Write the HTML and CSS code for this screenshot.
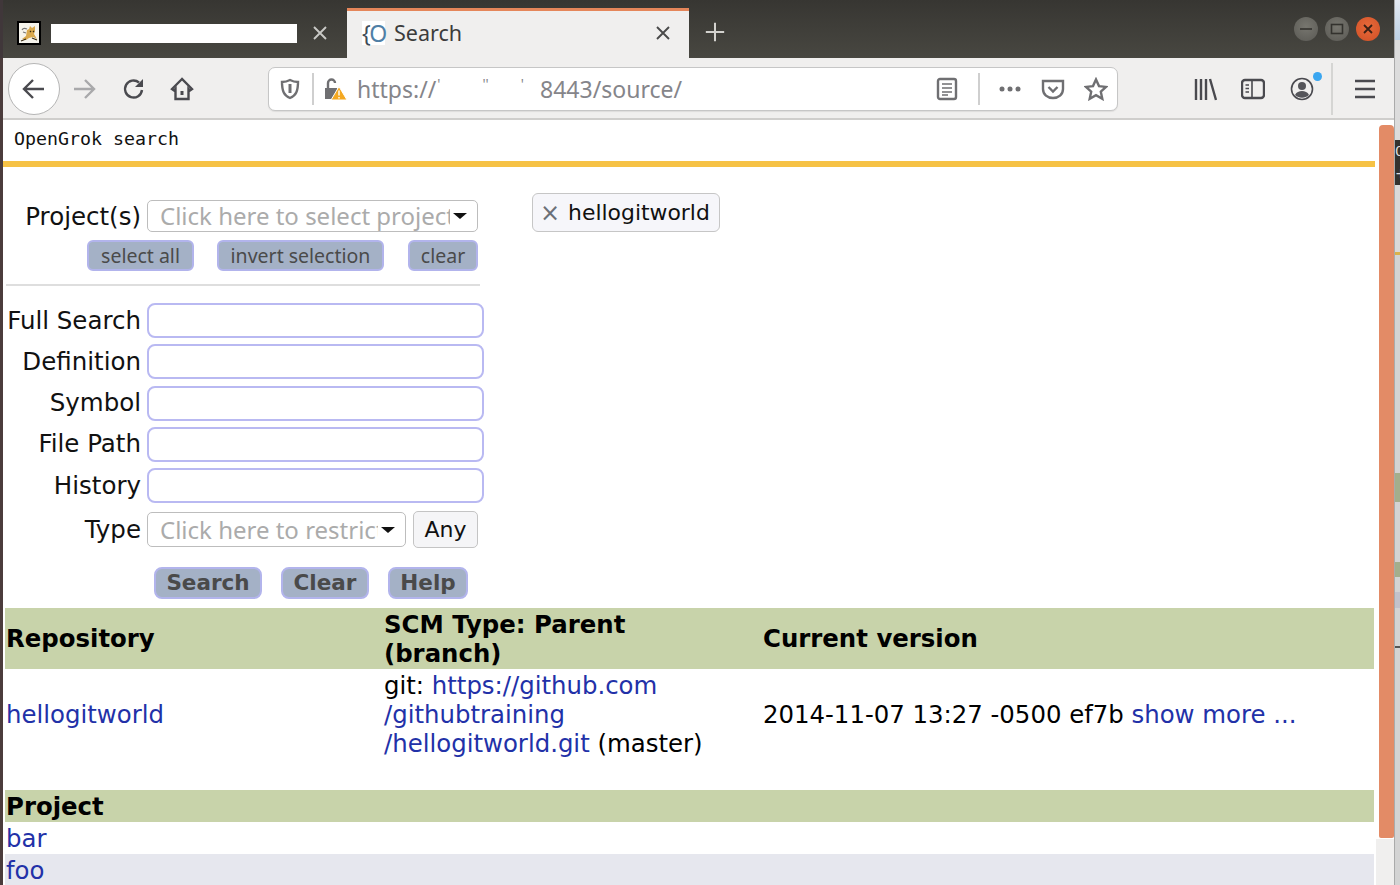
FILE: index.html
```html
<!DOCTYPE html>
<html lang="en">
<head>
<meta charset="utf-8">
<title>Search</title>
<link rel="stylesheet" href="styles.css">
</head>
<body>
<div class="screen">
  <div class="edge-left"><div class="edge-left-top"></div></div>
  <div class="window">
    <header class="tabbar">
      <div class="tab-idle">
        <svg class="favicon" viewBox="0 0 24 24"><rect x="1" y="1" width="22" height="22" fill="#f6f4ec" stroke="#000" stroke-width="2"/><path d="M5 18l4-3 1-6 2-1 1-3 2 2 3-2 0 5-1 3 3 5-4-2-4 1-3 2z" fill="#d9a94e"/><path d="M5 9c1-2 3-2 5-1M6 11l3 1" fill="none" stroke="#777" stroke-width="1.2"/><path d="M13 10l1 1M16 10l1 1M4 20l5-2M15 17l5 2" stroke="#3a2c14" stroke-width="1.2"/></svg>
        <div class="redact"></div>
        <svg class="tab-close light" viewBox="0 0 16 16"><path d="M2 2l12 12M14 2L2 14"/></svg>
      </div>
      <div class="tab-active">
        <span class="tab-fav"><span class="brace">{</span><span class="oh">O</span></span>
        <span class="tab-title">Search</span>
        <svg class="tab-close dark" viewBox="0 0 16 16"><path d="M2 2l12 12M14 2L2 14"/></svg>
      </div>
      <svg class="newtab" viewBox="0 0 24 24"><path d="M12 2v20M2 12h20"/></svg>
      <div class="winctl">
        <span class="wbtn"><svg viewBox="0 0 24 24"><path d="M6 12h12" stroke="#33322e" stroke-width="1.6"/></svg></span>
        <span class="wbtn"><svg viewBox="0 0 24 24"><rect x="6.5" y="7.5" width="11" height="9" fill="none" stroke="#33322e" stroke-width="1.6"/></svg></span>
        <span class="wbtn close"><svg viewBox="0 0 24 24"><path d="M8 8l8 8M16 8l-8 8" stroke="#3a2015" stroke-width="1.8"/></svg></span>
      </div>
    </header>

    <nav class="toolbar">
      <span class="backbtn"><svg class="ico" viewBox="0 0 24 24"><path d="M22 12H3M11 3l-9 9 9 9" class="st-dark"/></svg></span>
      <svg class="ico fwd" viewBox="0 0 24 24"><path d="M2 12h19M13 3l9 9-9 9" class="st-faint"/></svg>
      <svg class="ico reload" viewBox="0 0 24 24"><path d="M20 13a8.5 8.5 0 1 1-3-7.5" class="st-dark"/><path d="M21 2v8h-8z" fill="#4a4a4f"/></svg>
      <svg class="ico home" viewBox="0 0 24 24"><path d="M12 2L2 12l2 1.5 1.500-1.500V22h13V12l1.500 1.500L22 12z" class="st-dark"/><rect x="10.500" y="14" width="3" height="4" fill="#4a4a4f"/></svg>

      <div class="urlbar">
        <svg class="ico shield" viewBox="0 0 24 24"><path d="M12 3c3 1.600 5 2 8 2 0 9-2 13.500-8 16C6 18.500 4 14 4 5c3 0 5-.4 8-2z" class="st-grey"/><path d="M12 7v9" stroke="#6f6f72" stroke-width="3"/></svg>
        <span class="url-sep"></span>
        <svg class="ico lock" viewBox="0 0 24 24"><path d="M2 11h12v11H2z" fill="#6f6f72"/><path d="M5 11V6a3.500 3.500 0 0 1 7 0" fill="none" stroke="#6f6f72" stroke-width="2.400"/><path d="M16 9.500L24 23H8z" fill="#f4a821" stroke="#fff" stroke-width="1"/><path d="M16 13.500v5M16 20v1.600" stroke="#fff" stroke-width="1.400"/></svg>
        <span class="url-text">https://<span class="crumb one">'</span><span class="crumb two">''</span><span class="crumb three">'</span><span class="url-tail">8443/source/</span></span>
        <svg class="ico reader" viewBox="0 0 24 24"><rect x="3" y="2" width="18" height="20" rx="2" class="st-grey"/><path d="M7 7h10M7 11h10M7 15h10M7 18h6" stroke="#6f6f72" stroke-width="1.500"/></svg>
        <span class="url-sep wide"></span>
        <svg class="ico dots" viewBox="0 0 24 24"><circle cx="4" cy="12" r="2.500"/><circle cx="12" cy="12" r="2.500"/><circle cx="20" cy="12" r="2.500"/></svg>
        <svg class="ico pocket" viewBox="0 0 24 24"><path d="M2 4h20v8c0 5.500-4.500 9-10 9S2 17.500 2 12z" class="st-grey"/><path d="M7.500 10l4.500 4.500 4.500-4.500" class="st-grey"/></svg>
        <svg class="ico star" viewBox="0 0 24 24"><path d="M12 2.500l3 6.600 7 .8-5.200 4.800 1.500 7.100-6.300-3.600-6.300 3.600 1.500-7.100L2 9.900l7-.8z" class="st-grey"/></svg>
      </div>

      <svg class="ico library" viewBox="0 0 24 24"><path d="M3 2v21M8 2v21M13 2v21M17 2l6 21" stroke="#4a4a4f" stroke-width="2.400" fill="none"/></svg>
      <svg class="ico sidebar" viewBox="0 0 24 24"><rect x="1" y="3" width="22" height="18" rx="3" class="st-dark"/><path d="M11 3v18M4.500 8h3.500M4.500 11.500h3.500M4.500 15h3.500" stroke="#4a4a4f" stroke-width="1.600"/></svg>
      <span class="account">
        <svg class="ico" viewBox="0 0 24 24"><circle cx="12" cy="12" r="10.500" fill="none" stroke="#4a4a4f" stroke-width="1.600"/><circle cx="12" cy="9" r="4" fill="#55555a"/><path d="M5 18c1.500-3 4-4 7-4s5.500 1 7 4c-4 3.500-10 3.500-14 0z" fill="#55555a"/></svg>
        <span class="badge"></span>
      </span>
      <span class="tool-sep"></span>
      <svg class="ico menu" viewBox="0 0 24 24"><path d="M2 4h20M2 12h20M2 20h20" stroke="#4a4a4f" stroke-width="2.400"/></svg>
    </nav>

    <div class="viewport">
      <main class="page">
        <div class="brand">OpenGrok search</div>
        <div class="brand-rule"></div>
        <section class="search-area">
          <form class="search-form">
            <div class="frow">
              <label class="flabel project-label">Project(s)</label>
              <div class="chosen chosen-project"><span class="ph">Click here to select project</span><span class="caret"></span></div>
            </div>
            <div class="action-row">
              <button type="button" class="btn-mini sa">select all</button>
              <button type="button" class="btn-mini inv">invert selection</button>
              <button type="button" class="btn-mini clr">clear</button>
            </div>
            <div class="divider"></div>
            <div class="fields">
              <div class="frow"><label class="flabel">Full Search</label><input class="q" type="text"></div>
              <div class="frow"><label class="flabel">Definition</label><input class="q" type="text"></div>
              <div class="frow"><label class="flabel">Symbol</label><input class="q" type="text"></div>
              <div class="frow"><label class="flabel">File Path</label><input class="q" type="text"></div>
              <div class="frow"><label class="flabel">History</label><input class="q" type="text"></div>
            </div>
            <div class="frow type-row">
              <label class="flabel">Type</label>
              <div class="chosen chosen-type"><span class="ph">Click here to restrict</span><span class="caret"></span></div>
              <button type="button" class="any">Any</button>
            </div>
            <div class="submit-row">
              <button type="button" class="btn-main s">Search</button>
              <button type="button" class="btn-main c">Clear</button>
              <button type="button" class="btn-main h">Help</button>
            </div>
          </form>
          <div class="chip"><span class="chip-x">×</span><span>hellogitworld</span></div>
        </section>

        <table class="repos">
          <colgroup><col class="c1"><col class="c2"><col class="c3"></colgroup>
          <thead>
            <tr><th>Repository</th><th>SCM Type: Parent<br>(branch)</th><th>Current version</th></tr>
          </thead>
          <tbody>
            <tr>
              <td><a href="#">hellogitworld</a></td>
              <td>git: <a href="#">https://github.com<br>/githubtraining<br>/hellogitworld.git</a> (master)</td>
              <td>2014-11-07 13:27 -0500 ef7b <a href="#">show more ...</a></td>
            </tr>
          </tbody>
        </table>

        <div class="projects">
          <div class="proj-head">Project</div>
          <div class="proj-row"><a href="#">bar</a></div>
          <div class="proj-row alt"><a href="#">foo</a></div>
        </div>
      </main>
      <div class="scrollbar">
        <div class="thumb"></div>
        <div class="track"></div>
      </div>
    </div>
  </div>
  <aside class="edge-right">
    <div class="er blue"></div>
    <div class="er g1"></div>
    <div class="er dark"><span>0</span><span>+</span></div>
    <div class="er g2"></div>
    <div class="er yellow"></div>
    <div class="er g3"></div>
    <div class="er green a"></div>
    <div class="er g4"></div>
    <div class="er green b"></div>
    <div class="er g5"></div>
    <div class="er lav"></div>
    <div class="er g6"></div>
    <div class="er line"></div>
    <div class="er g7"></div>
  </aside>
</div>
</body>
</html>
```

FILE: styles.css
```css
* { box-sizing: border-box; }
html, body { margin: 0; padding: 0; height: 885px; overflow: hidden; background: #fff; }
body { font-family: "DejaVu Sans", sans-serif; color: #000; }

.screen { display: flex; width: 1400px; height: 885px; }
.edge-left { width: 3px; background: #4b3c3c; }
.edge-left-top { height: 58px; background: #40373a; }
.window { width: 1391px; display: flex; flex-direction: column; }

/* tab strip */
.tabbar { height: 58px; display: flex; align-items: flex-end; background: linear-gradient(#373632, #484741); flex: none; }
.tab-idle { width: 344px; height: 50px; display: flex; align-items: center; padding-left: 14px; }
.favicon { width: 24px; height: 24px; flex: none; }
.redact { width: 246px; height: 19px; margin-left: 10px; background: #fff; }
.tab-close { width: 16px; height: 16px; flex: none; fill: none; stroke-width: 1.900; }
.tab-close.light { margin-left: 15px; stroke: #c9c9c6; }
.tab-close.dark { margin-left: auto; margin-right: 18px; stroke: #4a4a4a; }
.tab-active { width: 342px; height: 50px; display: flex; align-items: center; background: #f0efee; border-top: 3px solid #e5865a; padding: 0 0 4px 15px; }
.tab-fav { width: 23px; height: 24px; background: #fff; font: 23px/24px "Noto Sans", sans-serif; letter-spacing: -1.500px; display: flex; }
.brace { color: #3f4d58; }
.oh { color: #4f7fa6; }
.tab-title { margin-left: 9px; font: 21.500px/28px "Noto Sans", sans-serif; color: #3c3c3c; }
.newtab { width: 22px; height: 22px; margin: 0 0 15px 15px; fill: none; stroke: #d3d2ce; stroke-width: 2.200; flex: none; }
.winctl { display: flex; gap: 7px; margin: 0 0 17px auto; padding-right: 14px; }
.wbtn { width: 24px; height: 24px; border-radius: 50%; background: radial-gradient(circle at 50% 40%, #77766f, #5a5954); display: block; }
.wbtn svg { display: block; width: 24px; height: 24px; }
.wbtn.close { background: radial-gradient(circle at 50% 40%, #e8693a, #cf5026); }

/* nav toolbar */
.toolbar { height: 62px; flex: none; display: flex; align-items: center; background: #f0efee; border-bottom: 2px solid #cfcecc; padding: 2px 0 0 5px; }
.ico { width: 24px; height: 24px; flex: none; display: block; }
.st-dark { fill: none; stroke: #4a4a4f; stroke-width: 2.400; }
.st-faint { fill: none; stroke: #a9a9ab; stroke-width: 2.400; }
.st-grey { fill: none; stroke: #6f6f72; stroke-width: 2.400; }
.backbtn { width: 52px; height: 52px; border-radius: 50%; border: 1px solid #b5b5b5; background: #fff; display: flex; align-items: center; justify-content: center; flex: none; }
.fwd { margin-left: 12px; }
.reload { margin-left: 26px; }
.home { margin-left: 24px; }
.urlbar { width: 850px; height: 44px; margin-left: 74px; background: #fff; border: 1px solid #c6c6c6; border-radius: 7px; box-shadow: 0 1px 1px rgba(0,0,0,.08); display: flex; align-items: center; padding-left: 9px; flex: none; }
.url-sep { width: 2px; height: 32px; background: #cfcfcf; margin-left: 10px; flex: none; }
.lock { margin-left: 9px; }
.url-text { margin-left: 10px; font: 23px/30px "Noto Sans", sans-serif; color: #85858a; white-space: nowrap; display: flex; width: 325px; }
.crumb { font-size: 14px; line-height: 20px; }
.crumb.two { margin-left: 42px; }
.crumb.one { margin-left: 1px; }
.crumb.three { margin-left: 32px; }
.url-tail { margin-left: auto; }
.reader { margin-left: 253px; }
.url-sep.wide { margin-left: 19px; }
.dots { margin-left: 18px; fill: #6f6f72; }
.pocket { margin-left: 19px; }
.star { margin-left: 19px; }
.library { margin-left: 75px; }
.sidebar { margin-left: 24px; }
.account { position: relative; display: block; width: 24px; height: 24px; margin-left: 25px; flex: none; }
.badge { position: absolute; right: -8px; top: -5px; width: 9px; height: 9px; border-radius: 50%; background: #3aa6f0; }
.tool-sep { width: 2px; height: 52px; background: #d5d5d3; margin-left: 17px; flex: none; }
.menu { margin-left: 20px; }

/* page */
.viewport { flex: 1; display: flex; min-height: 0; background: #fff; }
.page { width: 1373px; flex: none; overflow: hidden; }
.brand { height: 41px; padding: 8px 0 0 11px; font: 18.300px/22px "DejaVu Sans Mono", monospace; color: #111; }
.brand-rule { height: 6px; width: 1372px; background: #f6c245; }
.search-area { height: 441px; display: flex; align-items: flex-start; }
.search-form { width: 481px; padding-top: 33px; flex: none; }
.frow { display: flex; align-items: center; }
.flabel { width: 138px; margin-right: 6px; text-align: right; font-size: 24.500px; line-height: 30px; color: #111; flex: none; }
.project-label { padding-top: 2px; }

.chosen { height: 32px; background: #fff; border: 1px solid #bdbdbd; border-radius: 5px; display: flex; align-items: center; padding: 0 10px 0 12px; overflow: hidden; }
.chosen-project { width: 331px; }
.chosen-type { width: 259px; height: 35px; }
.ph { flex: 1; min-width: 0; overflow: hidden; white-space: nowrap; font: 24px/30px "Noto Sans", sans-serif; color: #ababab; }
.caret { width: 0; height: 0; margin-left: 3px; border-left: 7px solid transparent; border-right: 7px solid transparent; border-top: 6px solid #111; flex: none; }

.action-row { display: flex; margin-top: 8px; padding-left: 84px; }
.btn-mini { height: 31px; padding: 0; background: #a4b1c6; border: 2px solid #b2b4ec; border-radius: 6px; font: 19.500px/26px "Noto Sans", sans-serif; color: #4a4a4a; }
.btn-mini.sa { width: 107px; }
.btn-mini.inv { width: 167px; margin-left: 23px; }
.btn-mini.clr { width: 70px; margin-left: 24px; }
.divider { height: 2px; width: 474px; margin: 13px 0 17px 3px; background: #dedede; }
.fields { display: flex; flex-direction: column; gap: 6.250px; }
.q { width: 337px; height: 35px; padding: 0 8px; background: #fff; border: 2px solid #b9b9f2; border-radius: 8px; }
.type-row { margin-top: 8px; }
.any { width: 65px; height: 37px; margin-left: 7px; padding: 0; background: #f5f5f7; border: 1px solid #c4c4c4; border-radius: 5px; font: 22px/30px "DejaVu Sans", sans-serif; color: #111; }
.submit-row { display: flex; margin-top: 19px; padding-left: 151px; }
.btn-main { height: 32px; padding: 0; background: #a4b1c6; border: 2px solid #b2b4ec; border-radius: 8px; font: bold 21.500px/28px "DejaVu Sans", sans-serif; color: #4a4a4a; }
.btn-main.s { width: 108px; }
.btn-main.c { width: 88px; margin-left: 19px; }
.btn-main.h { width: 80px; margin-left: 19px; }

.chip { margin: 26px 0 0 48px; width: 188px; height: 39px; display: flex; align-items: center; gap: 8px; padding-left: 7px; background: #f6f6fa; border: 1px solid #c6c6c6; border-radius: 6px; font-size: 21.900px; color: #111; }
.chip-x { font-size: 24px; line-height: 30px; color: #6b7078; }

/* tables */
.repos { width: 1369px; margin-left: 2px; border-collapse: collapse; table-layout: fixed; font-size: 24.400px; line-height: 29px; }
.repos .c1, .repos .c2 { width: 378px; }
.repos th { height: 61px; padding: 0 2px 0 1px; background: #c8d3aa; font-weight: bold; text-align: left; }
.repos td { height: 92px; padding: 0 2px 1px 1px; vertical-align: middle; }
.repos th:last-child, .repos td:last-child { padding-left: 2px; }
a { color: #2231a8; text-decoration: none; }
.projects { width: 1369px; margin: 29px 0 0 2px; font-size: 24.400px; line-height: 32px; }
.proj-head { height: 32px; padding: 1px 0 0 1px; background: #c8d3aa; font-weight: bold; color: #000; }
.proj-row { height: 32px; padding: 1px 0 0 1px; }
.proj-row.alt { background: #e6e7ee; }

/* scrollbar */
.scrollbar { width: 18px; flex: none; display: flex; flex-direction: column; padding-top: 5px; background: #fff; }
.thumb { height: 713px; margin-left: 3px; background: #e38b66; border-radius: 4px 4px 2px 2px; flex: none; }
.track { flex: 1; background: #f0efee; margin-top: 1px; }

/* window behind */
.edge-right { width: 6px; flex: none; display: flex; flex-direction: column; background: #d3d3d3; border-left: 1px solid #aaa; overflow: hidden; }
.er { flex: none; }
.er.blue { height: 40px; background: linear-gradient(#e4eaf2, #bcd0e4); }
.er.g1 { height: 100px; background: #dcdcdc; }
.er.dark { height: 45px; background: #33322f; color: #ddd; font-size: 14px; line-height: 22px; display: flex; flex-direction: column; }
.er.g2 { height: 67px; background: #d9d9d9; }
.er.yellow { height: 3px; background: #d9b24c; }
.er.g3 { height: 218px; background: #d3d3d3; }
.er.green { background: #a3ae8c; }
.er.green.a { height: 29px; }
.er.g4 { height: 60px; background: #d3d3d3; }
.er.green.b { height: 15px; }
.er.g5 { height: 15px; background: #d3d3d3; }
.er.lav { height: 16px; background: #c2c2cb; }
.er.g6 { height: 38px; background: #d3d3d3; }
.er.line { height: 2px; background: #555; }
.er.g7 { flex: 1; background: #d3d3d3; }
```
